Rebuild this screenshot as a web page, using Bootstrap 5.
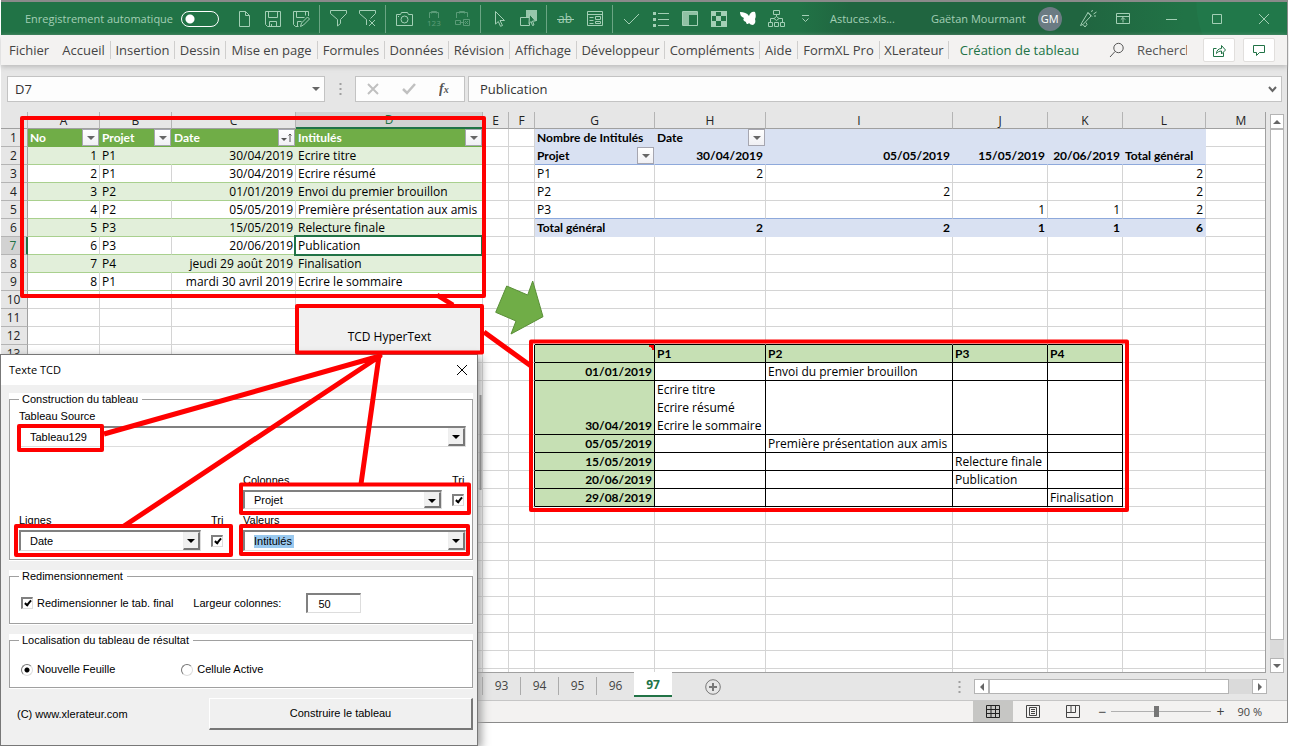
<!DOCTYPE html>
<html lang="fr">
<head>
<meta charset="utf-8">
<meta name="viewport" content="width=device-width, initial-scale=1">
<title>Astuces.xlsm - Excel</title>
<link rel="stylesheet" href="https://cdn.jsdelivr.net/npm/bootstrap@5.3.0/dist/css/bootstrap.min.css">
<style>
  :root { --xl-green:#217346; --pale:#a3cfb5; --line:#d4d4d4; --grey:#e6e6e6; --red:#f00; }
  body { font-family:"Open Sans","Noto Sans",sans-serif; font-size:13px; line-height:18px; color:#333; background:#fff; }
  button, input, select { font:inherit; color:inherit; }
  svg { display:block; fill:none; stroke:currentColor; }
  .workspace { height:100vh; padding:0 1px 23px 1px; }
  .app-window { border:1px solid #8a8a8a; border-width:2px 1px 1px 0; background:var(--grey); }

  .title-bar { height:33px; font-size:11px; color:var(--pale);
    background:radial-gradient(circle at 100% 0,#21784a 0 90px,transparent 91px),linear-gradient(90deg,#217346 0 62%,#206540 66% 84%,#217346 92%); }
  .title-bar button { background:none; border:0; padding:0; color:inherit; }
  .autosave { padding-left:24px; width:228px; }
  .switch { appearance:none; width:38px; height:16px; border:1px solid #fff; border-radius:8px; margin:0;
    background:radial-gradient(circle at 8px 7px,#fff 0 4px,transparent 5px); }
  .tool { width:29px; display:flex; justify-content:center; }
  .tool-sep { width:1px; height:28px; background:#6ba584; margin:0 4px 0 3px; }
  .dim { opacity:.45; }
  .file-name { margin-left:10px; width:101px; }
  .avatar { width:24px; height:24px; border-radius:50%; background:#6b7b83; color:#fff; margin-left:12px; }
  .win-tools { margin-left:17px; flex:1; padding-right:17px; }

  .ribbon { height:30px; background:#f3f2f1; color:#444; box-shadow:0 2px 5px #bbb; position:relative; padding-left:1px; }
  .ribbon-tabs { display:grid; grid-template-columns:55px 54px 64px 51px 92px 67px 64px 61px 67px 88px 95px 38px 82px 69px 142px; }
  .ribbon-tabs a { color:inherit; text-decoration:none; text-align:center; border-right:1px solid #cfcecd; white-space:nowrap; }
  .ribbon-tabs a:first-child, .ribbon-tabs a:last-child { border-color:transparent; }
  .ribbon-tabs .current { color:var(--xl-green); }
  .search-icon { margin-left:18px; }
  .search-box { width:50px; border:0; background:none; padding:0; margin-left:12px; }
  .search-box::placeholder { color:#555; opacity:1; }
  .ribbon-btn { width:32px; height:24px; padding:0; border:1px solid #e1dfdd; border-radius:2px; background:#fff; color:var(--xl-green); display:flex; align-items:center; justify-content:center; }

  .formula-row { padding:11px 5px 10px 6px; }
  .field { height:26px; border:1px solid #c3c3c3; background:#fdfdfd; }
  .name-box { width:318px; }
  .field input { border:0; background:none; width:100%; padding:0 7px; outline:0; }
  .formula-box input { padding-left:11px; }
  .dots { width:30px; color:#a0a0a0; display:flex; justify-content:center; }
  .fx-box { width:110px; margin-right:3px; color:#c0c0c0; }
  .fx-box button { border:0; background:none; padding:0; }

  .sheet-zone { min-height:0; flex:1; }
  .sheet { overflow:hidden; flex:1; position:relative; border-right:1px solid #a0a0a0; border-bottom:1px solid #a0a0a0; }
  .grid { table-layout:fixed; border-collapse:separate; border-spacing:0; width:calc(100% + 12px); font-size:12px; line-height:17px; color:#000; background:#fff; }
  .grid th, .grid td { height:18px; padding:0 2px; overflow:hidden; white-space:nowrap; border:solid var(--line); border-width:0 1px 1px 0; vertical-align:bottom; }
  .grid th { font-weight:400; text-align:center; background:var(--grey); color:#222; border-color:#b4b4b4; }
  .grid thead th { height:17px; line-height:14px; border-bottom-color:#a0a0a0; }
  .grid tbody th { border-right-color:#a0a0a0; padding:0 1px 0 0; }
  .grid th.sel { background:#d2d2d2; color:var(--xl-green); }
  .grid thead th.sel { border-bottom:2px solid var(--xl-green); }
  .grid tbody th.sel { border-right:2px solid var(--xl-green); }
  .grid .r { text-align:right; }
  .grid .bd { font-family:Lato,"Open Sans",sans-serif; font-weight:700; }
  .grid .src { border-bottom-color:#a9d08e; }
  .grid .band { background:#e2efda; border-right-color:#e2efda; }
  .grid .hd { background:#70ad47; color:#fff; border-color:#70ad47; position:relative; }
  .grid .piv { background:#d9e1f2; border-color:#d9e1f2; position:relative; }
  .grid .piv-line { border-bottom-color:#8ea9db; }
  .grid .bx { border-right-color:#000; border-bottom-color:#000; }
  .grid .bl { border-right-color:#000; }
  .grid .bt { border-bottom-color:#000; }
  .grid .gr { background:#c6e0b4; position:relative; }
  .grid .lines { line-height:18px; height:53px; }
  .grid .cur { overflow:visible; position:relative; }
  .cur::after { content:""; position:absolute; inset:-2px -1px -2px -2px; border:2px solid var(--xl-green); }
  .note::after { content:""; position:absolute; top:0; right:0; width:6px; height:6px; background:linear-gradient(to bottom left,red 50%,transparent 50%); }
  .flt { position:absolute; right:0; top:0; width:17px; height:17px; padding:0; border:1px solid #a6a6b0; background:linear-gradient(#fff,#f0f0f4); color:#555; display:flex; align-items:center; justify-content:center; }
  .tri { width:0; height:0; border:4px solid transparent; border-top-color:#666; border-bottom:0; }
  .tri.up { transform:rotate(180deg); } .tri.left { transform:rotate(90deg); } .tri.right { transform:rotate(-90deg); }
  .macro-btn { position:absolute; left:296px; top:194px; width:185px; height:48px; border:1px solid #999; background:#f0f0f0; color:#000; font-size:12px; padding:14px 0 0; }
  .v-scroll { width:14px; margin:2px 3px 0 4px; }
  .sb-btn { flex:0 0 15px; border:1px solid #b4b4b4; background:#fff; padding:0; display:flex; align-items:center; justify-content:center; }
  .sb-thumb { background:#fff; border:1px solid #b4b4b4; }
  .sb-track { background:#dadada; }
  .v-scroll .sb-track { height:18px; }
  .h-scroll .sb-track { width:23px; }

  .tab-row { height:27px; font-size:12px; color:#444; }
  .tab-row .sheet-tabs { margin:0 0 3px 481px; }
  .sheet-tabs a { width:38px; color:inherit; text-decoration:none; border-left:1px solid #ababab; margin:4px 0 2px; display:flex; align-items:center; justify-content:center; }
  .sheet-tabs a.current { margin:-1px 0 0; padding-top:3px; background:#fff; border:0; border-bottom:2px solid var(--xl-green); color:var(--xl-green); font-weight:700; position:relative; }
  .add-sheet { border:0; background:none; padding:0; margin-left:33px; color:#777; }
  .h-scroll { width:293px; height:15px; margin-right:20px; }
  .status-row { height:22px; background:#f3f2f1; border-top:1px solid #c6c6c6; font-size:11px; color:#444; padding-right:25px; }
  .view-btn { width:40px; height:21px; border:0; background:none; padding:0; display:flex; justify-content:center; align-items:center; }
  .view-btn.current { background:#c6c6c4; color:#222; }
  .zoom-range { appearance:none; width:100px; height:14px; margin:0 4px; background:linear-gradient(#b0b0b0,#b0b0b0) center/100% 1px no-repeat; }
  .zoom-range::-webkit-slider-thumb { appearance:none; width:5px; height:11px; background:#767676; }
  .zoom-step { border:0; background:none; padding:0; width:10px; font-size:14px; line-height:14px; }

  .macro-dialog { position:absolute; left:0; top:354px; width:478px; height:392px; background:#f0f0f0; border:1px solid #777; box-shadow:3px 3px 9px #999; font:11px/13px "Liberation Sans",Arial,sans-serif; color:#000; }
  .dialog-head { height:30px; background:#fff; padding:0 9px 0 8px; }
  .dialog-head h1 { font:11px/14px "Open Sans",sans-serif; margin:0; }
  .dialog-body { padding:8px 4px 0 8px; }
  .panel { background:#fff; margin-bottom:9px; padding-bottom:1px; }
  .panel fieldset { border:1px solid #a0a0a0; padding:0 6px 0 9px; }
  .panel legend { float:none; width:auto; font-size:11px; line-height:13px; margin:0; padding:0 4px 0 3px; }
  .construct { height:167px; }
  .combo-label { padding-bottom:3px; }
  .combo { position:relative; display:block; height:21px; border:solid; border-width:2px 1px 1px 2px; border-color:#808080 #ddd #ddd #808080; }
  .combo.slim { height:19px; }
  .combo select { display:block; appearance:none; border:0; width:100%; height:100%; padding:0 0 0 9px; line-height:16px; background:#fff; color:#000; }
  .combo::before { content:""; position:absolute; right:0; top:0; bottom:0; width:17px; background:#f0f0f0; border:solid; border-width:1px 2px 2px 1px; border-color:#eee #777 #777 #eee; pointer-events:none; }
  .combo::after { content:""; position:absolute; right:5px; top:7px; border:4px solid transparent; border-top-color:#000; border-bottom:0; pointer-events:none; }
  .combo .picked { background:linear-gradient(#99c9ef,#99c9ef) 9px center/40px 13px no-repeat #fff; }
  .tick { appearance:none; width:12px; height:12px; margin:0; border:solid; border-width:2px 1px 1px 2px; border-color:#808080 #ddd #ddd #808080; background:#fff; position:relative; flex:none; }
  .tick:checked::after { content:""; position:absolute; left:3px; top:0; width:4px; height:7px; border:solid #000; border-width:0 2px 2px 0; transform:rotate(40deg); }
  .dot { appearance:none; width:12px; height:12px; margin:0; border-radius:50%; border:1px solid; border-color:#777 #ddd #ddd #777; background:#fff; flex:none; }
  .dot:checked { background:radial-gradient(circle,#000 0 2px,#fff 3px); }
  .pair { display:grid; grid-template-columns:224px 1fr; }
  .cells { display:grid; grid-template-columns:1fr 14px; column-gap:10px; align-items:center; }
  .left-side { padding-right:18px; }
  .gap-large { margin-top:27px; } .gap-small { margin-top:5px; }
  .resize-line { padding:10px 2px; } .place-line { padding:16px 2px 11px; }
  .width-label { margin-left:20px; } .second-dot { margin-left:66px; }
  .width-box { width:55px; height:20px; border:solid; border-width:2px 1px 1px 2px; border-color:#808080 #ddd #ddd #808080; padding:1px 0 0 10px; margin-left:25px; }
  .build-btn { width:264px; height:32px; border:solid; border-width:1px 2px 2px 1px; border-color:#fff #777 #777 #fff; background:#f0f0f0; color:#000; }
  .marks { position:absolute; left:0; top:0; width:1289px; height:746px; pointer-events:none; }
</style>
</head>
<body class="position-relative overflow-hidden">
<div class="workspace">
<div class="app-window h-100 d-flex flex-column">

  <header class="title-bar d-flex align-items-center text-nowrap">
    <label class="autosave d-flex align-items-center gap-2">Enregistrement automatique <input type="checkbox" role="switch" class="switch"></label>
    <button class="tool" aria-label="Nouveau"><svg width="16" height="18"><path d="M3.500 1.500h6l4 4v11h-10zM9.500 1.500v4h4"/></svg></button>
    <button class="tool" aria-label="Enregistrer"><svg width="16" height="16"><path d="M.5.5h15v15h-13l-2-2zM3.500.5v6h9v-6M4.500 15.500v-5h7v5M6.500 13v2"/></svg></button>
    <button class="tool" aria-label="Enregistrer sous"><svg width="17" height="16"><path d="M15.500 5V.5H.5v13l2 2h3M3.500.5v6h8M12.500.5v4M4.500 15v-4.500h4M7.500 15.500l1-3.500 6-6 2 2-6 6z"/></svg></button>
    <span class="tool-sep"></span>
    <button class="tool" aria-label="Filtrer"><svg width="17" height="17"><path d="M.5.5h16v3l-6 6v4l-3 2.500V9.500l-7-6z"/></svg></button>
    <button class="tool" aria-label="Effacer le filtre"><svg width="17" height="17"><path d="M7.500 15V9.500l-7-6v-3h16v3l-5 5M10 10l6 6M16 10l-6 6"/></svg></button>
    <span class="tool-sep"></span>
    <button class="tool" aria-label="Photo"><svg width="17" height="14"><path d="M.5 2.500h4l1-2h6l1 2h4v11H.5z"/><circle cx="8.500" cy="7.500" r="3.500"/><path d="M2 4.500h1"/></svg></button>
    <button class="tool dim" aria-label="Coller les valeurs"><svg width="16" height="17"><path d="M3.500 8V2.500h9V8M5.500 3.500v-2h5v2"/><text x="1" y="16" font-size="8" fill="currentColor" stroke="none">123</text></svg></button>
    <button class="tool dim" aria-label="Coller avec liaison"><svg width="17" height="17"><path d="M2.500 8V2.500h11V7M5.500 3.500v-2h5v2M1.500 10.500h5v4h-5zM5.500 12.500h5M9.500 9.500h6v6h-6zM11 11l3 3M14 11l-3 3"/></svg></button>
    <span class="tool-sep"></span>
    <button class="tool" aria-label="Sélectionner"><svg width="14" height="17"><path d="M2.500 1.500l9 9H7l2.500 5-2 .8L5.300 11.500l-2.800 2.600z"/></svg></button>
    <button class="tool" aria-label="Volet Sélection"><svg width="17" height="17"><path d="M6 0h11v11H6z" fill="currentColor" stroke="none" opacity=".9"/><path d="M.5 7.500h9v8h-9z" fill="#217346"/><path d="M9.500 4l6 7h-3l1.500 4-1.500.5-1.500-4-2 2z" fill="#217346"/></svg></button>
    <span class="tool-sep"></span>
    <button class="tool" aria-label="Barré"><svg width="17" height="16"><text x="1" y="12" font-size="12" fill="currentColor" stroke="none">ab</text><path d="M0 8.500h17"/></svg></button>
    <button class="tool" aria-label="Formulaire"><svg width="16" height="15"><path d="M.5.5h15v14H.5zM.5 3.500h15M2.500 6.500h4M2.500 9.500h4M8.500 5.500h5v3h-5zM8.500 10.500h5v2h-5zM2.500 12.500h4"/></svg></button>
    <span class="tool-sep"></span>
    <button class="tool" aria-label="Valider"><svg width="17" height="14"><path d="M1 7l5 5L16 2"/></svg></button>
    <button class="tool" aria-label="Liste"><svg width="16" height="16"><path d="M5 2.500h11M5 8.500h11M5 14.500h11"/><path d="M0 2.500h3M0 8.500h3M0 14.500h3" stroke-width="3"/></svg></button>
    <button class="tool" aria-label="Volet"><svg width="16" height="15"><path d="M.5.5h15v14H.5z"/><path d="M1 1h14v3H1zM1 4h6v10H1z" fill="currentColor" stroke="none" opacity=".85"/><path d="M9 4h5v9H9z" fill="#217346" stroke="none"/></svg></button>
    <button class="tool" aria-label="Damier"><svg width="16" height="16"><path d="M0 0h16v16H0z" fill="currentColor" stroke="none"/><path d="M5 1h5v4H5zM1 5h4v5H1zM10 5h5v5h-5zM5 10h5v5H5z" fill="#217346" stroke="none"/></svg></button>
    <button class="tool text-white" aria-label="Xlerateur"><svg width="18" height="15"><path d="M1 1c4 0 7 1 9 4 1-3 3-5 6-4 1 3 1 5 0 7 1 3 0 5-2 6-2 0-3-1-4-2-1 2-3 1-3-1C4 10 4 8 5 7 2 6 1 4 1 1z" fill="currentColor" stroke="none"/></svg></button>
    <button class="tool" aria-label="Organigramme"><svg width="17" height="17"><path d="M5.500.5h6v4h-6zM.5 12.500h4v4h-4zM6.500 12.500h4v4h-4zM12.500 12.500h4v4h-4zM8.500 4.500v2M8.500 6.500l2.500 2-2.500 2-2.500-2zM6 8.500H2.500v4M11 8.500h3.500v4"/></svg></button>
    <button class="tool" aria-label="Personnaliser"><svg width="9" height="8"><path d="M1 .5h7M1.500 3.500l3 3 3-3"/></svg></button>
    <span class="file-name">Astuces.xls...</span>
    <span>Gaëtan Mourmant</span>
    <span class="avatar d-flex align-items-center justify-content-center">GM</span>
    <div class="win-tools d-flex align-items-center justify-content-between">
      <button aria-label="Nouveautés"><svg width="18" height="18"><path d="M1.500 15.500l2.500-1 8-8.500-3-3.500-6 10zM4 14.500l2 2.500 2-2.500-1-2M9 2.500l4 4M12.500 2l1-2M14.500 4l3-2M15 6h2"/></svg></button>
      <button aria-label="Options du ruban"><svg width="14" height="12"><path d="M.5.5h13v10H.5zM.5 3.500h13M7 9.500v-5M4.800 6.700L7 4.500l2.200 2.200"/></svg></button>
      <button class="ms-3" aria-label="Réduire"><svg width="11" height="10"><path d="M0 5.500h11"/></svg></button>
      <button class="ms-3" aria-label="Agrandir"><svg width="10" height="10"><path d="M.5.5h9v9h-9z"/></svg></button>
      <button class="ms-3" aria-label="Fermer"><svg width="12" height="12"><path d="M1 1l10 10M11 1L1 11"/></svg></button>
    </div>
  </header>

  <div class="ribbon d-flex align-items-center pe-2">
    <nav class="ribbon-tabs">
      <a href="#">Fichier</a><a href="#">Accueil</a><a href="#">Insertion</a><a href="#">Dessin</a><a href="#">Mise en page</a><a href="#">Formules</a><a href="#">Données</a><a href="#">Révision</a><a href="#">Affichage</a><a href="#">Développeur</a><a href="#">Compléments</a><a href="#">Aide</a><a href="#">FormXL Pro</a><a href="#">XLerateur</a><a href="#" class="current">Création de tableau</a>
    </nav>
    <svg class="search-icon flex-shrink-0" width="16" height="16" color="#555"><circle cx="9.500" cy="6" r="4.700"/><path d="M6 9.500L1 15"/></svg>
    <input class="search-box" aria-label="Rechercher" placeholder="Rechercher">
    <button class="ribbon-btn ms-auto me-2" aria-label="Partager"><svg width="13" height="13"><path d="M3.500 4.500h-3v8h10v-4M3.500 9.500c0-3 2-5 5-5v-3l4 4.500-4 4v-3c-2 0-4 1-5 2.500z"/></svg></button>
    <button class="ribbon-btn me-1" aria-label="Commentaires"><svg width="12" height="11"><path d="M.5.5h11v7h-5l-3 3v-3h-3z"/></svg></button>
  </div>

  <div class="formula-row d-flex align-items-center">
    <div class="field name-box d-flex align-items-center"><input aria-label="Zone Nom" value="D7"><span class="tri me-1"></span></div>
    <span class="dots"><svg width="3" height="12"><path d="M1.500 0v12" stroke-width="2" stroke-dasharray="2 3"/></svg></span>
    <div class="field fx-box d-flex align-items-center justify-content-around">
      <button aria-label="Annuler"><svg width="12" height="12" stroke-width="2"><path d="M1 1l10 10M11 1L1 11"/></svg></button>
      <button aria-label="Entrer"><svg width="14" height="12" stroke-width="2.500"><path d="M1 6l4 4 8-9"/></svg></button>
      <button aria-label="Insérer une fonction"><svg width="14" height="14"><text x="0" y="11" font-family="Liberation Serif" font-style="italic" font-weight="700" font-size="14" fill="#555" stroke="none">f<tspan font-size="10">x</tspan></text></svg></button>
    </div>
    <div class="field formula-box flex-fill d-flex align-items-center"><input aria-label="Barre de formule" value="Publication"><svg class="me-1" width="9" height="7" color="#666" stroke-width="2"><path d="M1 1l3.500 4L8 1"/></svg></div>
  </div>

  <div class="sheet-zone d-flex">
    <div class="sheet">
      <table class="grid">
        <colgroup id="cols"></colgroup>
        <thead><tr id="letters"></tr></thead>
        <tbody id="rows"></tbody>
      </table>
      <button class="macro-btn">TCD HyperText</button>
    </div>
    <div class="v-scroll d-flex flex-column">
      <button class="sb-btn" aria-label="Haut"><span class="tri up"></span></button>
      <div class="sb-thumb flex-fill"></div><div class="sb-track"></div>
      <button class="sb-btn" aria-label="Bas"><span class="tri"></span></button>
    </div>
  </div>

  <div class="tab-row d-flex">
    <nav class="sheet-tabs d-flex"><a href="#">93</a><a href="#">94</a><a href="#">95</a><a href="#">96</a><a href="#" class="current">97</a></nav>
    <button class="add-sheet" aria-label="Nouvelle feuille"><svg width="16" height="16"><circle cx="8" cy="8" r="7.300"/><path d="M4 8h8M8 4v8" stroke-width="2"/></svg></button>
    <span class="dots ms-auto align-items-center"><svg width="3" height="12"><path d="M1.500 0v12" stroke-width="2" stroke-dasharray="2 3"/></svg></span>
    <div class="h-scroll d-flex align-self-center">
      <button class="sb-btn" aria-label="Gauche"><span class="tri left"></span></button>
      <div class="sb-thumb flex-fill"></div><div class="sb-track"></div>
      <button class="sb-btn" aria-label="Droite"><span class="tri right"></span></button>
    </div>
  </div>

  <footer class="status-row d-flex align-items-center justify-content-end">
    <button class="view-btn current" aria-label="Normal"><svg width="14" height="13"><path d="M.5.5h13v12H.5zM.5 4.500h13M.5 8.500h13M5 .5v12M9.500.5v12"/></svg></button>
    <button class="view-btn" aria-label="Mise en page"><svg width="14" height="13"><path d="M.5.5h13v12H.5zM3.500 2.500h7v8h-7zM5 4.500h4M5 6.500h4M5 8.500h4"/></svg></button>
    <button class="view-btn" aria-label="Sauts de page"><svg width="14" height="13"><path d="M.5.5h13v12H.5zM.5 7.500h9v-7M5 .5v7"/></svg></button>
    <button class="zoom-step ms-1" aria-label="Zoom arrière">−</button>
    <input type="range" class="zoom-range" min="0" max="200" value="90" aria-label="Zoom">
    <button class="zoom-step" aria-label="Zoom avant">+</button>
    <span class="ms-2 ps-1">90 %</span>
  </footer>
</div>
</div>

<section class="macro-dialog" role="dialog" aria-labelledby="dlg">
  <div class="dialog-head d-flex align-items-center justify-content-between"><h1 id="dlg">Texte TCD</h1>
    <button class="border-0 bg-transparent p-0" aria-label="Fermer"><svg width="12" height="12"><path d="M1 1l10 10M11 1L1 11"/></svg></button></div>
  <form class="dialog-body">
    <div class="panel"><fieldset class="construct"><legend>Construction du tableau</legend>
      <label for="src" class="combo-label d-block mt-1">Tableau Source</label>
      <span class="combo"><select id="src"><option>Tableau129</option></select></span>
      <div class="pair gap-large"><span></span>
        <div class="cells combo-label"><label for="colf">Colonnes</label><label for="t1">Tri</label></div></div>
      <div class="pair"><span></span>
        <div class="cells"><span class="combo slim"><select id="colf"><option>Projet</option></select></span><input id="t1" type="checkbox" class="tick" checked></div></div>
      <div class="pair combo-label gap-small">
        <div class="cells left-side"><label for="rowf">Lignes</label><label for="t2">Tri</label></div><label for="valf">Valeurs</label></div>
      <div class="pair">
        <div class="cells left-side"><span class="combo"><select id="rowf"><option>Date</option></select></span><input id="t2" type="checkbox" class="tick" checked></div>
        <span class="combo"><select id="valf" class="picked"><option>Intitulés</option></select></span></div>
    </fieldset></div>
    <div class="panel"><fieldset><legend>Redimensionnement</legend>
      <div class="resize-line d-flex align-items-center">
        <input id="rs" type="checkbox" class="tick" checked><label for="rs" class="ms-1">Redimensionner le tab. final</label>
        <label for="wd" class="width-label">Largeur colonnes:</label><input id="wd" class="width-box" value="50">
      </div></fieldset></div>
    <div class="panel"><fieldset><legend>Localisation du tableau de résultat</legend>
      <div class="place-line d-flex align-items-center">
        <input id="n1" name="loc" type="radio" class="dot" checked><label for="n1" class="ms-1">Nouvelle Feuille</label>
        <input id="n2" name="loc" type="radio" class="dot second-dot"><label for="n2" class="ms-1">Cellule Active</label>
      </div></fieldset></div>
    <div class="d-flex align-items-center justify-content-between ps-2"><span>(C) www.xlerateur.com</span><button type="button" class="build-btn">Construire le tableau</button></div>
  </form>
</section>

<svg class="marks" aria-hidden="true" viewBox="0 0 1289 746">
  <path d="M480.500 395v95" stroke="#888" stroke-width="2"/>
  <path d="M506.700 286l21 9 5-14 10.300 35.700-32 17.300 5-13-20.300-8.700z" fill="#70ad47" stroke="#5a8f38"/>
  <g stroke="#f00" stroke-width="4" stroke-linejoin="round">
    <path d="M22 118h462v178H22zM297 306h185v46.500H297zM531 341.500h596V510H531zM19 426h83v24H19zM241 484.500h228V513H241zM16 526h215v29H16zM241 526h227v28H241z"/>
    <path d="M437 295l16 10M484 332l47 34M104 434l276-78L124 526M361 484l18-128" stroke-width="5"/>
  </g>
</svg>

<script src="https://cdn.jsdelivr.net/npm/bootstrap@5.3.0/dist/js/bootstrap.bundle.min.js"></script>
<script>
  const widths = [27, 72, 72, 124, 187, 26, 26, 120, 111, 187, 95, 75, 83];
  cols.innerHTML = widths.map(w => `<col style="width:${w}px">`).join('') + '<col>';
  letters.innerHTML = '<th></th>' + [...'ABCDEFGHIJKLM'].map(l => `<th${l === 'D' ? ' class="sel"' : ''}>${l}</th>`).join('');

  const cells = {};
  const put = (ref, cls, html = '') => cells[ref] = { cls, html };
  const filter = '<button class="flt" aria-label="Filtrer"><span class="tri"></span></button>';
  const sorted = '<button class="flt" aria-label="Trié"><svg width="13" height="11"><path d="M1 6h6l-3 3z" fill="currentColor" stroke="none"/><path d="M10 10V2M8.500 3.500L10 2l1.500 1.500"/></svg></button>';

  /* source table */
  put('A1', 'hd bd', 'No' + filter); put('B1', 'hd bd', 'Projet' + filter);
  put('C1', 'hd bd', 'Date' + sorted); put('D1', 'hd bd', 'Intitulés' + filter);
  [['P1', '30/04/2019', 'Ecrire titre'], ['P1', '30/04/2019', 'Ecrire résumé'], ['P2', '01/01/2019', 'Envoi du premier brouillon'],
   ['P2', '05/05/2019', 'Première présentation aux amis'], ['P3', '15/05/2019', 'Relecture finale'], ['P3', '20/06/2019', 'Publication'],
   ['P4', 'jeudi 29 août 2019', 'Finalisation'], ['P1', 'mardi 30 avril 2019', 'Ecrire le sommaire']].forEach((r, i) => {
    const c = 'src' + (i % 2 ? '' : ' band'), n = i + 2;
    put('A' + n, c + ' r', i + 1); put('B' + n, c, r[0]); put('C' + n, c + ' r', r[1]); put('D' + n, c + (n === 7 ? ' cur' : ''), r[2]);
  });

  /* pivot table */
  const pivotRow = (n, cls, values) => [...'GHIJKL'].forEach((l, i) => put(l + n, cls + (i && values[i] !== 'Date' && values[i] !== 'Total général' ? ' r' : ''), values[i] ?? ''));
  pivotRow(1, 'piv bd', ['Nombre de Intitulés', 'Date']);
  pivotRow(2, 'piv bd piv-line', ['Projet', '30/04/2019', '05/05/2019', '15/05/2019', '20/06/2019', 'Total général']);
  cells.H1.html += filter; cells.G2.html += filter;
  pivotRow(3, '', ['P1', 2, '', '', '', 2]);
  pivotRow(4, '', ['P2', '', 2, '', '', 2]);
  pivotRow(5, 'piv-line', ['P3', '', '', 1, 1, 2]);
  pivotRow(6, 'piv bd', ['Total général', 2, 2, 1, 1, 6]);

  /* text cross table */
  [...'GHIJK'].forEach((l, i) => {
    put(l + 12, 'bt');
    put(l + 13, 'bx gr bd' + (i ? '' : ' note'), ['', 'P1', 'P2', 'P3', 'P4'][i]);
  });
  [['01/01/2019', '', 'Envoi du premier brouillon'], ['30/04/2019', '<div class="lines">Ecrire titre<br>Ecrire résumé<br>Ecrire le sommaire</div>'],
   ['05/05/2019', '', 'Première présentation aux amis'], ['15/05/2019', '', '', 'Relecture finale'],
   ['20/06/2019', '', '', 'Publication'], ['29/08/2019', '', '', '', 'Finalisation']].forEach((r, i) =>
    [...'GHIJK'].forEach((l, j) => put(l + (14 + i), j ? 'bx' : 'bx gr bd r', r[j] ?? '')));
  for (let n = 13; n < 20; n++) put('F' + n, 'bl');

  let html = '';
  for (let n = 1; n <= 60; n++) {
    html += `<tr><th${n === 7 ? ' class="sel"' : ''}>${n <= 13 ? n : ''}</th>`;
    for (const l of 'ABCDEFGHIJKLM') {
      const c = cells[l + n];
      html += c ? `<td class="${c.cls}">${c.html}</td>` : '<td></td>';
    }
    html += '</tr>';
  }
  rows.innerHTML = html;
</script>
</body>
</html>
